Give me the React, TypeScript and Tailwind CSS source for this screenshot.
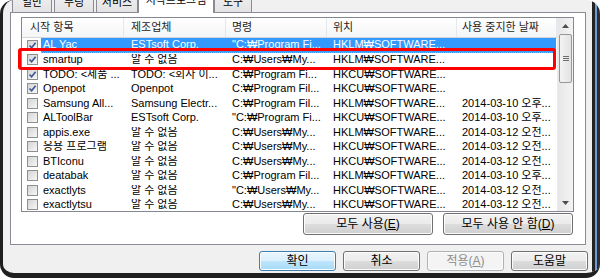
import React from "react";

type Row = {
  name: string;
  maker: string;
  cmd: string;
  loc: string;
  date: string;
  checked: boolean;
  selected?: boolean;
};

const rows: Row[] = [
  { name: "AL Yac", maker: "ESTsoft Corp.", cmd: "\"C:₩Program Fi...", loc: "HKLM₩SOFTWARE...", date: "", checked: true, selected: true },
  { name: "smartup", maker: "알 수 없음", cmd: "C:₩Users₩My...", loc: "HKLM₩SOFTWARE...", date: "", checked: true },
  { name: "TODO: <제품 ...", maker: "TODO: <회사 이...", cmd: "C:₩Program Fi...", loc: "HKCU₩SOFTWARE...", date: "", checked: true },
  { name: "Openpot", maker: "Openpot", cmd: "C:₩Program Fil...", loc: "HKCU₩SOFTWARE...", date: "", checked: true },
  { name: "Samsung All...", maker: "Samsung Electr...", cmd: "C:₩Program Fil...", loc: "HKLM₩SOFTWARE...", date: "2014-03-10 오후...", checked: false },
  { name: "ALToolBar", maker: "ESTsoft Corp.", cmd: "\"C:₩Program Fi...", loc: "HKCU₩SOFTWARE...", date: "2014-03-10 오후...", checked: false },
  { name: "appis.exe", maker: "알 수 없음", cmd: "C:₩Users₩My...", loc: "HKLM₩SOFTWARE...", date: "2014-03-12 오전...", checked: false },
  { name: "응용 프로그램", maker: "알 수 없음", cmd: "C:₩Users₩My...", loc: "HKCU₩SOFTWARE...", date: "2014-03-12 오전...", checked: false },
  { name: "BTIconu", maker: "알 수 없음", cmd: "C:₩Users₩My...", loc: "HKCU₩SOFTWARE...", date: "2014-03-12 오전...", checked: false },
  { name: "deatabak", maker: "알 수 없음", cmd: "C:₩Program Fil...", loc: "HKLM₩SOFTWARE...", date: "2014-03-10 오후...", checked: false },
  { name: "exactlyts", maker: "알 수 없음", cmd: "\"C:₩Users₩My...", loc: "HKCU₩SOFTWARE...", date: "2014-03-12 오전...", checked: false },
  { name: "exactlytsu", maker: "알 수 없음", cmd: "C:₩Users₩My...", loc: "HKCU₩SOFTWARE...", date: "2014-03-12 오전...", checked: false },
  { name: "", maker: "", cmd: "", loc: "", date: "", checked: false },
];

function CheckBox({ checked }: { checked: boolean }) {
  return (
    <div className="w-[11px] h-[11px] border border-[#8e8f8f] bg-[linear-gradient(135deg,#d4d4d4,#f7f7f7)] flex items-center justify-center shrink-0">
      {checked && (
        <svg width="9" height="9" viewBox="0 0 9 9">
          <path d="M1.5 4.5 L3.6 6.8 L7.6 1.8" fill="none" stroke="#3d5a94" strokeWidth="1.7" />
        </svg>
      )}
    </div>
  );
}

function Btn({ children, w, kind }: { children: React.ReactNode; w: string; kind?: "default" | "disabled" }) {
  let cls =
    "border-[#707070] bg-[linear-gradient(to_bottom,#f2f2f2_0%,#ebebeb_50%,#dddddd_50%,#cfcfcf_100%)] text-black";
  if (kind === "default")
    cls = "border-[#3c7fb1] bg-[linear-gradient(to_bottom,#eaf6fd_0%,#d9f0fc_50%,#bee6fd_50%,#a7d9f5_100%)] text-black";
  if (kind === "disabled") cls = "border-[#adb2b5] bg-[#f4f4f4] text-[#8c8c8c]";
  return (
    <div
      className={`${w} h-full rounded-[3px] border shadow-[inset_0_0_0_1px_#fcfcfc] flex items-center justify-center text-[12px] leading-none ${cls}`}
    >
      {children}
    </div>
  );
}

function Tab({ label, w, active }: { label: string; w: string; active?: boolean }) {
  if (active)
    return (
      <div className={`${w} h-[25px] mb-[-1px] mx-[-2px] bg-white border border-b-0 border-[#898c95] rounded-t-[2px] flex items-center justify-center pb-[1px] relative z-10`}>
        {label}
      </div>
    );
  return (
    <div className={`${w} h-[22px] bg-[linear-gradient(to_bottom,#f2f2f2,#e3e3e3)] border border-b-0 border-[#898c95] rounded-t-[2px] flex items-center justify-center pt-[1px]`}>
      {label}
    </div>
  );
}

export default function App() {
  return (
    <div className="relative w-[600px] h-[278px] bg-white overflow-hidden font-['Liberation_Sans','Noto_Sans_CJK_KR',sans-serif] text-[11px] text-black">
      <div className="w-[600px] h-[278px] rounded-[14px] overflow-hidden border-l-[3px] border-b-[5px] border-[#1f1f1f] bg-[#f0f0f0] flex">
        <div className="flex-1 flex flex-col">
          {/* tabs */}
          <div className="h-[12px] flex items-end pl-[9px] gap-[2px] text-[11px] leading-none relative z-10">
            <Tab label="일반" w="w-[40px]" />
            <Tab label="부팅" w="w-[40px]" />
            <Tab label="서비스" w="w-[42px]" />
            <Tab label="시작프로그램" w="w-[76px]" active />
            <Tab label="도구" w="w-[38px]" />
          </div>

          {/* panel */}
          <div className="ml-[7px] mr-[6px] h-[233px] border border-[#898c95] bg-white pt-[4px] pl-[10px] pr-[11px]">
            <div className="w-[553px] h-[195px] border border-[#828790] flex bg-white">
              <div className="flex-1 flex flex-col overflow-hidden">
                <div className="h-[20px] shrink-0 flex border-b border-[#d5d5d5] bg-[linear-gradient(to_bottom,#ffffff,#f4f5f7)] text-[#1e1e1e] leading-none">
                  <div className="w-[102px] pl-[8px] flex items-center border-r border-[#e3e8ee]">시작 항목</div>
                  <div className="w-[102px] pl-[7px] flex items-center border-r border-[#e3e8ee]">제조업체</div>
                  <div className="w-[101px] pl-[6px] flex items-center border-r border-[#e3e8ee]">명령</div>
                  <div className="w-[130px] pl-[6px] flex items-center border-r border-[#e3e8ee]">위치</div>
                  <div className="w-[100px] pl-[5px] flex items-center border-r border-[#e3e8ee]">사용 중지한 날짜</div>
                </div>
                {rows.map((r, i) => (
                  <div key={i} className="h-[14.5px] shrink-0 flex items-center leading-none whitespace-nowrap">
                    <div className="w-[19px] pl-[5px] flex items-center">
                      <CheckBox checked={r.checked} />
                    </div>
                    <div
                      className={`flex h-full items-center ${
                        r.selected ? "bg-[#3399ff] text-white border-b border-dotted border-[#c9a86a]" : ""
                      }`}
                    >
                      <div className="w-[83px] pl-[2px] overflow-hidden">{r.name}</div>
                      <div className="w-[102px] pl-[7px] overflow-hidden">{r.maker}</div>
                      <div className="w-[101px] pl-[6px] overflow-hidden">{r.cmd}</div>
                      <div className="w-[130px] pl-[6px] overflow-hidden">{r.loc}</div>
                      <div className="w-[99px] pl-[5px] overflow-hidden">{r.date}</div>
                    </div>
                  </div>
                ))}
              </div>
              {/* scrollbar */}
              <div className="w-[16px] flex flex-col bg-[linear-gradient(to_right,#e6e6e6,#f4f4f4)] border-l border-[#eaeaea]">
                <div className="h-[16px] flex items-center justify-center">
                  <svg width="7" height="4" viewBox="0 0 7 4">
                    <path d="M0 4 L3.5 0 L7 4 Z" fill="#4d4d4d" />
                  </svg>
                </div>
                <div className="h-[49px] mx-[1px] rounded-[2px] border border-[#979797] bg-[linear-gradient(to_right,#f3f3f3,#e2e2e2)] flex flex-col items-center justify-center gap-[1px]">
                  <div className="w-[6px] h-px bg-[#6e6e6e]" />
                  <div className="w-[6px] h-px bg-[#6e6e6e]" />
                  <div className="w-[6px] h-px bg-[#6e6e6e]" />
                </div>
                <div className="flex-1" />
                <div className="h-[16px] flex items-center justify-center">
                  <svg width="7" height="4" viewBox="0 0 7 4">
                    <path d="M0 0 L3.5 4 L7 0 Z" fill="#4d4d4d" />
                  </svg>
                </div>
              </div>
            </div>
            <div className="mt-[1px] h-[22px] flex justify-end gap-[10px] pr-[1px]">
              <Btn w="w-[130px]">
                모두 사용(<span className="underline">E</span>)
              </Btn>
              <Btn w="w-[130px]">
                모두 사용 안 함(<span className="underline">D</span>)
              </Btn>
            </div>
          </div>

          {/* dialog buttons */}
          <div className="mt-[6px] h-[20px] flex justify-end gap-[7px] pr-[4px]">
            <Btn w="w-[77px]" kind="default">확인</Btn>
            <Btn w="w-[77px]">취소</Btn>
            <Btn w="w-[77px]" kind="disabled">
              적용(<span className="underline">A</span>)
            </Btn>
            <Btn w="w-[77px]">도움말</Btn>
          </div>
        </div>
        {/* window edge behind */}
        <div className="w-[8px] flex">
          <div className="w-[3px] bg-[#232323]" />
          <div className="w-[2px] bg-[#6d9bd1]" />
          <div className="w-[3px] bg-[#2e2e2e]" />
        </div>
      </div>

      {/* red annotation box */}
      <div className="absolute left-[18px] top-[48px] w-[538px] h-[22px] border-[3px] border-[#ff0000] rounded-[3px]" />
    </div>
  );
}
